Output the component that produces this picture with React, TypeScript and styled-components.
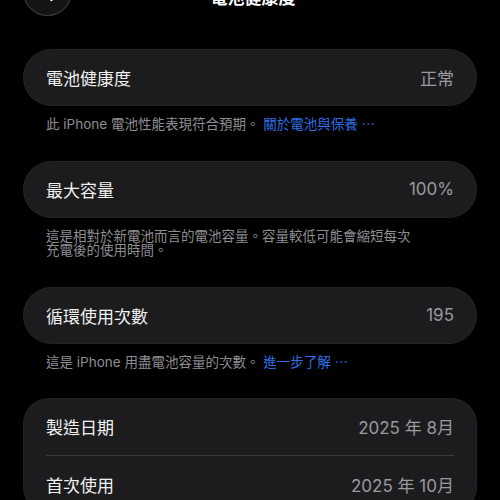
import React from 'react'
import styled, { createGlobalStyle } from 'styled-components'

const GlobalStyle = createGlobalStyle`
  html, body {
    margin: 0;
    padding: 0;
    background: #000;
  }
  body {
    font-family: "Inter", "Noto Sans CJK TC", "Noto Sans", sans-serif;
    color: #f2f2f2;
    overflow: hidden;
  }
`;

const Page = styled.div`
  width: 500px;
  height: 500px;
  overflow: hidden;
  background: #000;
  padding: 0 23px;
  box-sizing: border-box;
`;

const Header = styled.div`
  display: grid;
  grid-template-columns: 49px 1fr 49px;
  height: 49px;
  margin-top: -33px;
  margin-bottom: 33px;
`;

const BackButton = styled.div`
  width: 49px;
  height: 49px;
  border-radius: 50%;
  background: #141414;
  box-shadow: inset 0 0 0 1px rgba(255, 255, 255, 0.18);
  display: flex;
  align-items: center;
  justify-content: center;
  color: #fff;
`;

const Title = styled.div`
  text-align: center;
  font-size: 17px;
  font-weight: 600;
  line-height: 20px;
  margin-top: 21px;
  padding-left: 6px;
  color: #fff;
`;

const Sections = styled.div`
  display: flex;
  flex-direction: column;
  gap: 29px;
`;

const Section = styled.div`
  display: flex;
  flex-direction: column;
`;

const Card = styled.div<{ $pill?: boolean }>`
  background: #1c1c1e;
  border-radius: ${(p) => (p.$pill ? '28.5px' : '26px')};
  box-shadow: inset 0 0 0 1px rgba(255, 255, 255, 0.04);
  display: flex;
  flex-direction: column;
`;

const Row = styled.div`
  height: 57px;
  padding: 0 23px;
  display: flex;
  align-items: center;
  justify-content: space-between;
  font-size: 17px;
`;

const RowSeparator = styled.div`
  height: 1px;
  margin: 0 23px;
  background: #3a3a3c;
`;

const Label = styled.span`
  color: #f2f2f2;
`;

const Value = styled.span`
  color: #9a9a9f;
`;

const Footnote = styled.div`
  margin-top: 11px;
  padding: 0 23px;
  max-width: 372px;
  font-size: 13.5px;
  line-height: 14.5px;
  color: #8e8e93;
`;

const Link = styled.span`
  color: #2f6fe4;
`;

const ChevronLeft = () => (
  <svg width="24" height="24" viewBox="0 0 24 24" fill="none" stroke="currentColor" strokeWidth="2.4" strokeLinecap="round" strokeLinejoin="round">
    <path d="M15.5 4 L7.5 12 L15.5 20" />
  </svg>
);

export default function App() {
  return (
    <>
      <GlobalStyle />
      <Page>
        <Header>
          <BackButton>
            <ChevronLeft />
          </BackButton>
          <Title>電池健康度</Title>
          <div />
        </Header>
        <Sections>
          <Section>
            <Card $pill>
              <Row>
                <Label>電池健康度</Label>
                <Value>正常</Value>
              </Row>
            </Card>
            <Footnote>
              此 iPhone 電池性能表現符合預期。 <Link>關於電池與保養 ⋯</Link>
            </Footnote>
          </Section>
          <Section>
            <Card $pill>
              <Row>
                <Label>最大容量</Label>
                <Value>100%</Value>
              </Row>
            </Card>
            <Footnote>這是相對於新電池而言的電池容量。容量較低可能會縮短每次充電後的使用時間。</Footnote>
          </Section>
          <Section>
            <Card $pill>
              <Row>
                <Label>循環使用次數</Label>
                <Value>195</Value>
              </Row>
            </Card>
            <Footnote>
              這是 iPhone 用盡電池容量的次數。 <Link>進一步了解 ⋯</Link>
            </Footnote>
          </Section>
          <Section>
            <Card>
              <Row>
                <Label>製造日期</Label>
                <Value>2025 年 8月</Value>
              </Row>
              <RowSeparator />
              <Row>
                <Label>首次使用</Label>
                <Value>2025 年 10月</Value>
              </Row>
            </Card>
          </Section>
        </Sections>
      </Page>
    </>
  );
}
